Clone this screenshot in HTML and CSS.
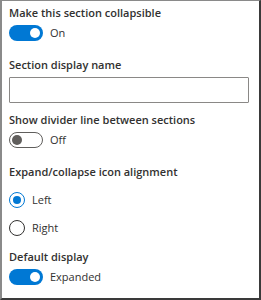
FILE: index.html
```html
<!DOCTYPE html>
<html>
<head>
<meta charset="utf-8">
<link rel="stylesheet" href="styles.css">
</head>
<body>
<div class="panel">
  <div class="label first">Make this section collapsible</div>
  <div class="toggle-row">
    <span class="toggle on"><span class="knob"></span></span>
    <span class="state">On</span>
  </div>

  <div class="label gap16">Section display name</div>
  <input class="text-input" type="text">

  <div class="label gap9">Show divider line between sections</div>
  <div class="toggle-row">
    <span class="toggle off"><span class="knob"></span></span>
    <span class="state">Off</span>
  </div>

  <div class="label gap16">Expand/collapse icon alignment</div>
  <div class="radio-row r1">
    <span class="radio checked"><span class="dot"></span></span>
    <span class="state">Left</span>
  </div>
  <div class="radio-row r2">
    <span class="radio"></span>
    <span class="state">Right</span>
  </div>

  <div class="label gap11">Default display</div>
  <div class="toggle-row">
    <span class="toggle on"><span class="knob"></span></span>
    <span class="state">Expanded</span>
  </div>
</div>
</body>
</html>
```

FILE: styles.css
```css
html, body {
  margin: 0;
  padding: 0;
  background: #ffffff;
}

.panel {
  box-sizing: border-box;
  width: 261px;
  height: 300px;
  border-top: 1px solid #8a8a8a;
  border-left: 2px solid #8a8a8a;
  border-right: 2px solid #3a3a3a;
  border-bottom: 2px solid #3a3a3a;
  padding: 4px 10px 0 7px;
  font-family: "Open Sans", "Noto Sans", sans-serif;
  color: #323130;
  display: flex;
  flex-direction: column;
  align-items: flex-start;
}

.label {
  font-size: 11px;
  font-weight: 600;
  line-height: 16px;
  height: 16px;
  white-space: nowrap;
}

.first { margin-top: 0; }
.gap16 { margin-top: 16px; }
.gap9 { margin-top: 9px; }
.gap11 { margin-top: 11px; }

.toggle-row {
  margin-top: 4px;
  display: flex;
  align-items: center;
  gap: 7px;
  height: 16px;
}

.toggle {
  box-sizing: border-box;
  position: relative;
  width: 34px;
  height: 16px;
  border-radius: 8px;
  display: flex;
  align-items: center;
}

.toggle.on {
  background: #0078d4;
  justify-content: flex-end;
  padding-right: 3px;
}

.toggle.off {
  background: #ffffff;
  border: 1px solid #605e5c;
  padding-left: 2px;
}

.knob {
  width: 10px;
  height: 10px;
  border-radius: 50%;
}

.toggle.on .knob { background: #ffffff; }
.toggle.off .knob { background: #605e5c; }

.state {
  font-size: 11px;
  font-weight: 400;
  line-height: 16px;
  color: #323130;
}

.text-input {
  box-sizing: border-box;
  margin: 4px 0 0 0;
  width: 240px;
  height: 26px;
  border: 1px solid #8a8886;
  border-radius: 1px;
  background: #ffffff;
  padding: 0 6px;
  outline: none;
}

.radio-row {
  display: flex;
  align-items: center;
  gap: 7px;
  height: 20px;
}

.r1 { margin-top: 10px; }
.r2 { margin-top: 8px; }

.radio {
  box-sizing: border-box;
  width: 16px;
  height: 16px;
  border-radius: 50%;
  border: 1px solid #323130;
  display: flex;
  align-items: center;
  justify-content: center;
}

.radio.checked {
  border-color: #0078d4;
}

.dot {
  width: 8px;
  height: 8px;
  border-radius: 50%;
  background: #0078d4;
}
```
